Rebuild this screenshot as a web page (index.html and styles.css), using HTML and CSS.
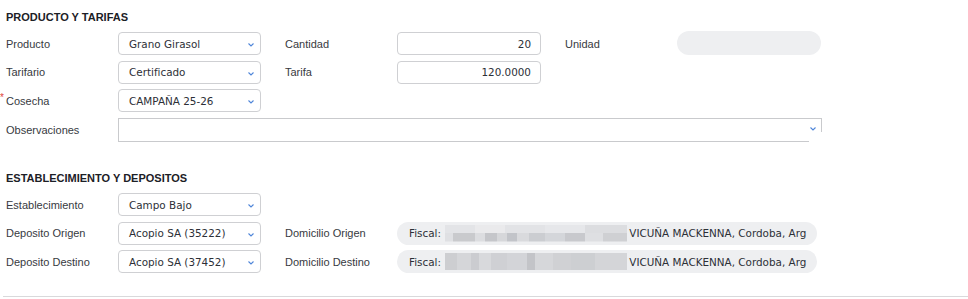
FILE: index.html
```html
<!DOCTYPE html>
<html lang="es">
<head>
    <meta charset="UTF-8">
    <title>Producto y Tarifas</title>
    <link rel="stylesheet" href="styles.css">
</head>
<body>
    <div class="form">
        <h3 class="section-title">PRODUCTO Y TARIFAS</h3>
        <div class="grid">
            <div class="lbl first">Producto</div>
            <div class="cell"><div class="select">Grano Girasol<svg class="chev" viewBox="0 0 6 4"><polyline points="0.5,0.5 3,3 5.5,0.5"/></svg></div></div>
            <div class="lbl">Cantidad</div>
            <div class="cell"><div class="input num">20</div></div>
            <div class="lbl">Unidad</div>
            <div class="cell"><div class="pill"></div></div>

            <div class="lbl first">Tarifario</div>
            <div class="cell"><div class="select">Certificado<svg class="chev" viewBox="0 0 6 4"><polyline points="0.5,0.5 3,3 5.5,0.5"/></svg></div></div>
            <div class="lbl">Tarifa</div>
            <div class="cell"><div class="input num">120.0000</div></div>

            <div class="lbl first required">Cosecha</div>
            <div class="cell"><div class="select">CAMPAÑA 25-26<svg class="chev" viewBox="0 0 6 4"><polyline points="0.5,0.5 3,3 5.5,0.5"/></svg></div></div>

            <div class="lbl first">Observaciones</div>
            <div class="cell wide"><div class="select obs"><svg class="chev" viewBox="0 0 6 4"><polyline points="0.5,0.5 3,3 5.5,0.5"/></svg></div></div>
        </div>

        <h3 class="section-title second">ESTABLECIMIENTO Y DEPOSITOS</h3>
        <div class="grid">
            <div class="lbl first">Establecimiento</div>
            <div class="cell"><div class="select">Campo Bajo<svg class="chev" viewBox="0 0 6 4"><polyline points="0.5,0.5 3,3 5.5,0.5"/></svg></div></div>

            <div class="lbl first">Deposito Origen</div>
            <div class="cell"><div class="select">Acopio SA (35222)<svg class="chev" viewBox="0 0 6 4"><polyline points="0.5,0.5 3,3 5.5,0.5"/></svg></div></div>
            <div class="lbl">Domicilio Origen</div>
            <div class="cell addr"><div class="pill address">Fiscal: <span class="blur one"></span>VICUÑA MACKENNA, Cordoba, Arg</div></div>

            <div class="lbl first">Deposito Destino</div>
            <div class="cell"><div class="select">Acopio SA (37452)<svg class="chev" viewBox="0 0 6 4"><polyline points="0.5,0.5 3,3 5.5,0.5"/></svg></div></div>
            <div class="lbl">Domicilio Destino</div>
            <div class="cell addr"><div class="pill address">Fiscal: <span class="blur two"></span>VICUÑA MACKENNA, Cordoba, Arg</div></div>
        </div>

        <div class="separator"></div>
    </div>
</body>
</html>
```

FILE: styles.css
```css
body {
    margin: 0;
    background: #fff;
    font-family: "Liberation Sans", Arial, sans-serif;
    color: #373a41;
}

.form {
    padding-top: 10px;
}

.section-title {
    margin: 0 0 8px 6px;
    font-size: 11px;
    line-height: 14px;
    font-weight: bold;
    color: #1c2026;
}

.section-title.second {
    margin-top: 30px;
}

.grid {
    display: grid;
    grid-template-columns: 112px 167px 112px 168px 112px 144px;
    grid-auto-rows: 23px;
    row-gap: 5.7px;
    padding-left: 6px;
}

.lbl {
    font-size: 11px;
    display: flex;
    align-items: center;
    white-space: nowrap;
    position: relative;
}

.lbl.first {
    grid-column: 1;
}

.lbl.required::before {
    content: "*";
    color: #e0453a;
    position: absolute;
    left: -6px;
    top: 3px;
    font-size: 10px;
}

.cell.wide {
    grid-column: 2 / span 5;
}

.cell.addr {
    grid-column: 4 / span 3;
}

.select,
.input {
    box-sizing: border-box;
    width: 143px;
    height: 23px;
    border: 1px solid #cfd0d3;
    border-radius: 4px;
    font-family: "DejaVu Sans", sans-serif;
    font-size: 10.4px;
    color: #2d3037;
    display: flex;
    align-items: center;
    padding: 0 10px;
    position: relative;
    white-space: nowrap;
}

.input {
    width: 144px;
}

.num {
    justify-content: flex-end;
    padding-right: 9px;
}

.chev {
    position: absolute;
    right: 6px;
    top: 10px;
    width: 6px;
    height: 4px;
    fill: none;
    stroke: #4f86d9;
    stroke-width: 1.1;
}

.select.obs {
    width: 704px;
    height: 24px;
    border-radius: 0;
    border-color: #c9cacd;
}

.select.obs::after {
    content: "";
    position: absolute;
    right: -1px;
    bottom: -1px;
    width: 13px;
    height: 10px;
    background: #fff;
}

.select.obs .chev {
    right: 5px;
    top: 8px;
}

.pill {
    width: 144px;
    height: 24px;
    margin-top: -1px;
    border-radius: 12px;
    background: #eeeff1;
}

.pill.address {
    box-sizing: border-box;
    width: 420px;
    height: 23px;
    margin-top: 0;
    display: flex;
    align-items: center;
    padding-left: 12px;
    font-family: "DejaVu Sans", sans-serif;
    font-size: 10.4px;
    color: #2d3037;
    white-space: pre;
}

.blur {
    display: inline-block;
    width: 182px;
    height: 17px;
    margin: 0 2px 0 1px;
}

.blur.one {
    background:
        linear-gradient(90deg, #dfe0e3 0 8px, #c9cacd 8px 30px, #dcdde0 30px 40px, #c5c6ca 40px 52px, #d6d7da 52px 62px, #c2c4c9 62px 72px, #d9dadd 72px 84px, #cbcdd1 84px 100px, #d4d6da 100px 120px, #c8c9cd 120px 140px, #dedfe2 140px 158px, #cfd0d3 158px 182px) bottom / 100% 50% no-repeat,
        linear-gradient(90deg, #e3e4e7 0 30px, #eaeaec 30px 60px, #e2e3e6 60px 100px, #e6e7ea 100px 140px, #dcdde0 140px 182px) top / 100% 50% no-repeat;
}

.blur.two {
    background: linear-gradient(90deg, #cdced1 0 12px, #d5d6d9 12px 26px, #cbccd0 26px 34px, #d8d9dc 34px 46px, #cfd0d4 46px 62px, #d3d4d8 62px 82px, #c3c4c8 82px 90px, #d6d7da 90px 108px, #d0d1d4 108px 126px, #cdcfd2 126px 150px, #d4d5d8 150px 182px);
}

.separator {
    margin: 23px 0 0 3px;
    height: 1px;
    background: #d9d9db;
}
```
